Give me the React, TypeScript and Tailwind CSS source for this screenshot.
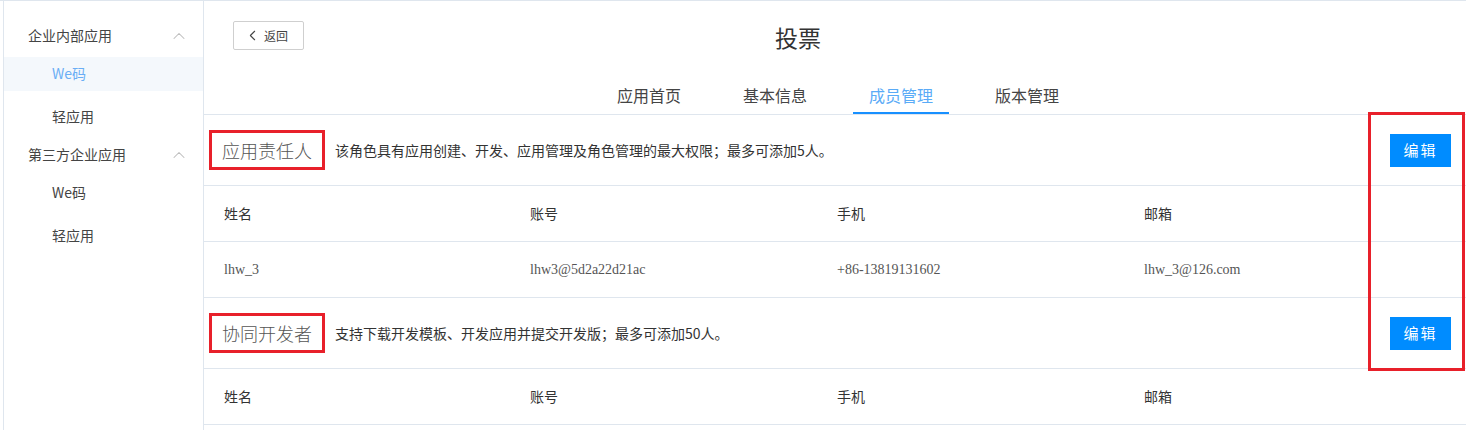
import { ChevronLeft, ChevronUp } from "lucide-react"

const font = "font-['Noto_Sans_CJK_SC',sans-serif]"

const sidebarGroups = [
  { title: "企业内部应用", items: ["We码", "轻应用"], active: 0 },
  { title: "第三方企业应用", items: ["We码", "轻应用"], active: -1 },
]

const tabs = ["应用首页", "基本信息", "成员管理", "版本管理"]

const Sidebar = () => (
  <div className="ml-[3px] w-[201px] shrink-0 border-x border-[#dfe6ee] pt-[18px]">
    {sidebarGroups.map((group) => (
      <div key={group.title}>
        <div className="flex h-[33px] items-center justify-between pl-[24px] pr-[14px] text-[14px] text-[#444]">
          {group.title}
          <ChevronUp className="h-[20px] w-[20px] text-[#bdbdbd]" strokeWidth={1.25} />
        </div>
        {group.items.map((item, i) => (
          <div key={item} className="flex h-[43px] items-center">
            <div
              className={`flex h-[34px] w-full items-center pl-[48px] text-[14px] ${
                i === group.active ? "bg-[#f4f8fc] text-[#6aaef5]" : "text-[#444]"
              }`}
            >
              {item}
            </div>
          </div>
        ))}
      </div>
    ))}
  </div>
)

interface RoleSectionProps {
  title: string
  desc: string
  rows: string[][]
}

const RoleSection = ({ title, desc, rows }: RoleSectionProps) => (
  <div>
    <div className="flex h-[71px] items-center border-b border-[#dfe6ee] pl-[5px] pr-[15px]">
      <span className="flex h-[40px] items-center border-[3px] border-[#e8202a] px-[10px] text-[18px] font-light text-[#555]">
        {title}
      </span>
      <span className="ml-[10px] text-[14px] text-[#333]">{desc}</span>
      <button className="ml-auto h-[33px] w-[61px] bg-[#008cff] text-[15px] tracking-[2px] text-white">
        编辑
      </button>
    </div>
    <div className="grid h-[56px] grid-cols-[306px_307px_307px_1fr] items-center border-b border-[#dfe6ee] pl-[20px] text-[14px] text-[#333]">
      <div>姓名</div>
      <div>账号</div>
      <div>手机</div>
      <div>邮箱</div>
    </div>
    {rows.map((row) => (
      <div
        key={row[0]}
        className="grid h-[56px] grid-cols-[306px_307px_307px_1fr] items-center border-b border-[#dfe6ee] pl-[20px] font-['Liberation_Serif',serif] text-[14px] text-[#555]"
      >
        {row.map((cell) => (
          <div key={cell}>{cell}</div>
        ))}
      </div>
    ))}
  </div>
)

export default function App() {
  return (
    <div className={`relative flex h-[430px] w-[1466px] overflow-hidden border-t border-[#dfe6ee] bg-white ${font}`}>
      <Sidebar />
      <div className="flex-1">
        {/* header */}
        <div className="pt-[20px]">
          <div className="flex h-[29px] items-center">
            <button className="ml-[29px] flex h-[29px] w-[71px] items-center rounded-[2px] border border-[#cfcfcf] pl-[10px] text-[12px] text-[#444]">
              <ChevronLeft className="mr-[3px] h-[17px] w-[17px]" strokeWidth={1.5} />
              返回
            </button>
            <div className="ml-[471px] mt-[3px] text-[23px] text-[#333]">投票</div>
          </div>
          <div className="mt-[30px] flex gap-[30px] border-b border-[#dfe6ee] pl-[397px]">
            {tabs.map((tab, i) => (
              <div
                key={tab}
                className={`flex h-[34px] w-[96px] items-center justify-center border-b-2 pb-[2px] text-[16px] ${
                  i === 2 ? "border-[#1890ff] text-[#5aabf7]" : "border-transparent text-[#444]"
                }`}
              >
                {tab}
              </div>
            ))}
          </div>
        </div>
        <RoleSection
          title="应用责任人"
          desc="该角色具有应用创建、开发、应用管理及角色管理的最大权限；最多可添加5人。"
          rows={[["lhw_3", "lhw3@5d2a22d21ac", "+86-13819131602", "lhw_3@126.com"]]}
        />
        <RoleSection
          title="协同开发者"
          desc="支持下载开发模板、开发应用并提交开发版；最多可添加50人。"
          rows={[]}
        />
      </div>
      {/* annotation box */}
      <div className="pointer-events-none absolute left-[1368px] top-[111px] h-[259px] w-[97px] border-[3px] border-[#e8202a]" />
    </div>
  )
}
